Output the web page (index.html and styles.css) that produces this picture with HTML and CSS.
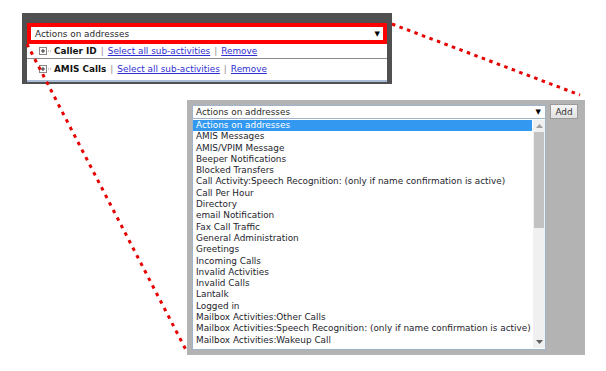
FILE: index.html
```html
<!DOCTYPE html>
<html>
<head>
<meta charset="utf-8">
<link rel="stylesheet" href="styles.css">
</head>
<body>
<div class="page">
  <div class="top-panel">
    <div class="red-box">
      <div class="select top-select"><span>Actions on addresses</span><span class="arrow">▼</span></div>
    </div>
    <div class="rows">
      <div class="row row1">
        <svg class="tree-icon" width="13" height="9" viewBox="0 0 13 9"><rect x="0.5" y="0.5" width="7" height="7" fill="#fff" stroke="#888"/><path d="M2 4h4M4 2v4" stroke="#333" stroke-width="1"/><path d="M9 4h1M11 4h1" stroke="#999"/></svg>
        <b>Caller ID</b><span class="sep">|</span><a>Select all sub-activities</a><span class="sep">|</span><a>Remove</a>
      </div>
      <div class="row row2">
        <svg class="tree-icon" width="13" height="9" viewBox="0 0 13 9"><rect x="0.5" y="0.5" width="7" height="7" fill="#fff" stroke="#888"/><path d="M2 4h4M4 2v4" stroke="#333" stroke-width="1"/><path d="M9 4h1M11 4h1" stroke="#999"/></svg>
        <b>AMIS Calls</b><span class="sep">|</span><a>Select all sub-activities</a><span class="sep">|</span><a>Remove</a>
      </div>
    </div>
  </div>

  <div class="bottom-panel">
    <div class="control-row">
      <div class="select bottom-select"><span>Actions on addresses</span><span class="arrow">▼</span></div>
      <div class="add-btn">Add</div>
    </div>
    <div class="listbox">
      <ul class="items">
        <li class="selected">Actions on addresses</li>
        <li>AMIS Messages</li>
        <li>AMIS/VPIM Message</li>
        <li>Beeper Notifications</li>
        <li>Blocked Transfers</li>
        <li>Call Activity:Speech Recognition: (only if name confirmation is active)</li>
        <li>Call Per Hour</li>
        <li>Directory</li>
        <li>email Notification</li>
        <li>Fax Call Traffic</li>
        <li>General Administration</li>
        <li>Greetings</li>
        <li>Incoming Calls</li>
        <li>Invalid Activities</li>
        <li>Invalid Calls</li>
        <li>Lantalk</li>
        <li>Logged in</li>
        <li>Mailbox Activities:Other Calls</li>
        <li>Mailbox Activities:Speech Recognition: (only if name confirmation is active)</li>
        <li>Mailbox Activities:Wakeup Call</li>
      </ul>
      <div class="scrollbar">
        <div class="sb-btn"><svg width="7" height="4" viewBox="0 0 7 4"><path d="M0 4L3.5 0L7 4Z" fill="#a0a0a0"/></svg></div>
        <div class="sb-track"><div class="sb-thumb"></div></div>
        <div class="sb-btn"><svg width="7" height="4" viewBox="0 0 7 4"><path d="M0 0L3.5 4L7 0Z" fill="#606060"/></svg></div>
      </div>
    </div>
  </div>

  <svg class="callout" width="606" height="371" viewBox="0 0 606 371">
    <line x1="392" y1="24" x2="580" y2="95" stroke="#e60000" stroke-width="3" stroke-dasharray="3.5 4.5"/>
    <line x1="27" y1="44" x2="186" y2="350" stroke="#e60000" stroke-width="3" stroke-dasharray="3.5 5"/>
  </svg>
</div>
</body>
</html>
```

FILE: styles.css
```css
html, body {
  margin: 0;
  padding: 0;
  background: #fff;
}
.page {
  position: relative;
  width: 606px;
  height: 371px;
  overflow: hidden;
  font-family: "DejaVu Sans", Verdana, sans-serif;
  font-size: 8.9px;
  color: #241e2c;
  padding-top: 13px;
  box-sizing: border-box;
}
.top-panel {
  margin-left: 22px;
  width: 370px;
  height: 71px;
  background: #505050;
  padding: 10px 5px 0 5px;
  box-sizing: border-box;
}
.red-box {
  border: 4px solid #ff0000;
  background: #fff;
  height: 21px;
  box-sizing: border-box;
}
.select {
  display: flex;
  align-items: center;
  justify-content: space-between;
  background: #fff;
  box-sizing: border-box;
  color: #2a2a2a;
}
.top-select {
  height: 13px;
  padding: 0 3px 0 4px;
}
.arrow {
  font-size: 7px;
  color: #000;
}
.rows {
  background: #fff;
  border-bottom: 2px solid #a9bdd6;
}
.row {
  display: flex;
  align-items: center;
  padding-left: 12px;
  white-space: nowrap;
}
.row1 {
  height: 14px;
  border-bottom: 1px solid #8a8a8a;
}
.row2 {
  height: 21px;
  padding-bottom: 1px;
  box-sizing: border-box;
}
.tree-icon {
  margin-right: 2px;
  flex: none;
}
.row b {
  color: #141414;
}
.sep {
  color: #8a8a8a;
  margin: 0 4px;
}
.row a {
  color: #2f2fd0;
  text-decoration: underline;
}
.bottom-panel {
  margin: 16px 0 0 187px;
  width: 398px;
  height: 255px;
  background: #b3b3b3;
  padding: 5px;
  box-sizing: border-box;
}
.control-row {
  display: flex;
  align-items: center;
  gap: 4px;
}
.bottom-select {
  width: 354px;
  height: 14px;
  border: 1px solid #9fb4cc;
  padding: 0 4px 0 3px;
}
.add-btn {
  width: 28px;
  height: 15px;
  box-sizing: border-box;
  border: 1px solid #9a9a9a;
  background: linear-gradient(#f4f4f4, #e2e2e2);
  display: flex;
  align-items: center;
  justify-content: center;
  color: #333;
  margin-top: -1px;
}
.listbox {
  width: 354px;
  height: 231px;
  box-sizing: border-box;
  border: 1px solid #9fb4cc;
  border-top: none;
  background: #fff;
  display: flex;
}
.items {
  list-style: none;
  margin: 1px 0 0 0;
  padding: 0;
  flex: 1;
  overflow: hidden;
}
.items li {
  height: 11.3px;
  line-height: 11.3px;
  padding-left: 3px;
  white-space: nowrap;
  overflow: hidden;
}
.items li.selected {
  background: #3399f0;
  color: #fff;
}
.scrollbar {
  width: 12px;
  display: flex;
  flex-direction: column;
  background: #f0f0f0;
  margin: 1px 0 1px 1px;
}
.sb-btn {
  height: 12px;
  display: flex;
  align-items: center;
  justify-content: center;
  flex: none;
}
.sb-track {
  flex: 1;
}
.sb-thumb {
  height: 96px;
  background: #c2c2c2;
  margin: 0 1px;
}
.callout {
  position: absolute;
  left: 0;
  top: 0;
  pointer-events: none;
}
```
